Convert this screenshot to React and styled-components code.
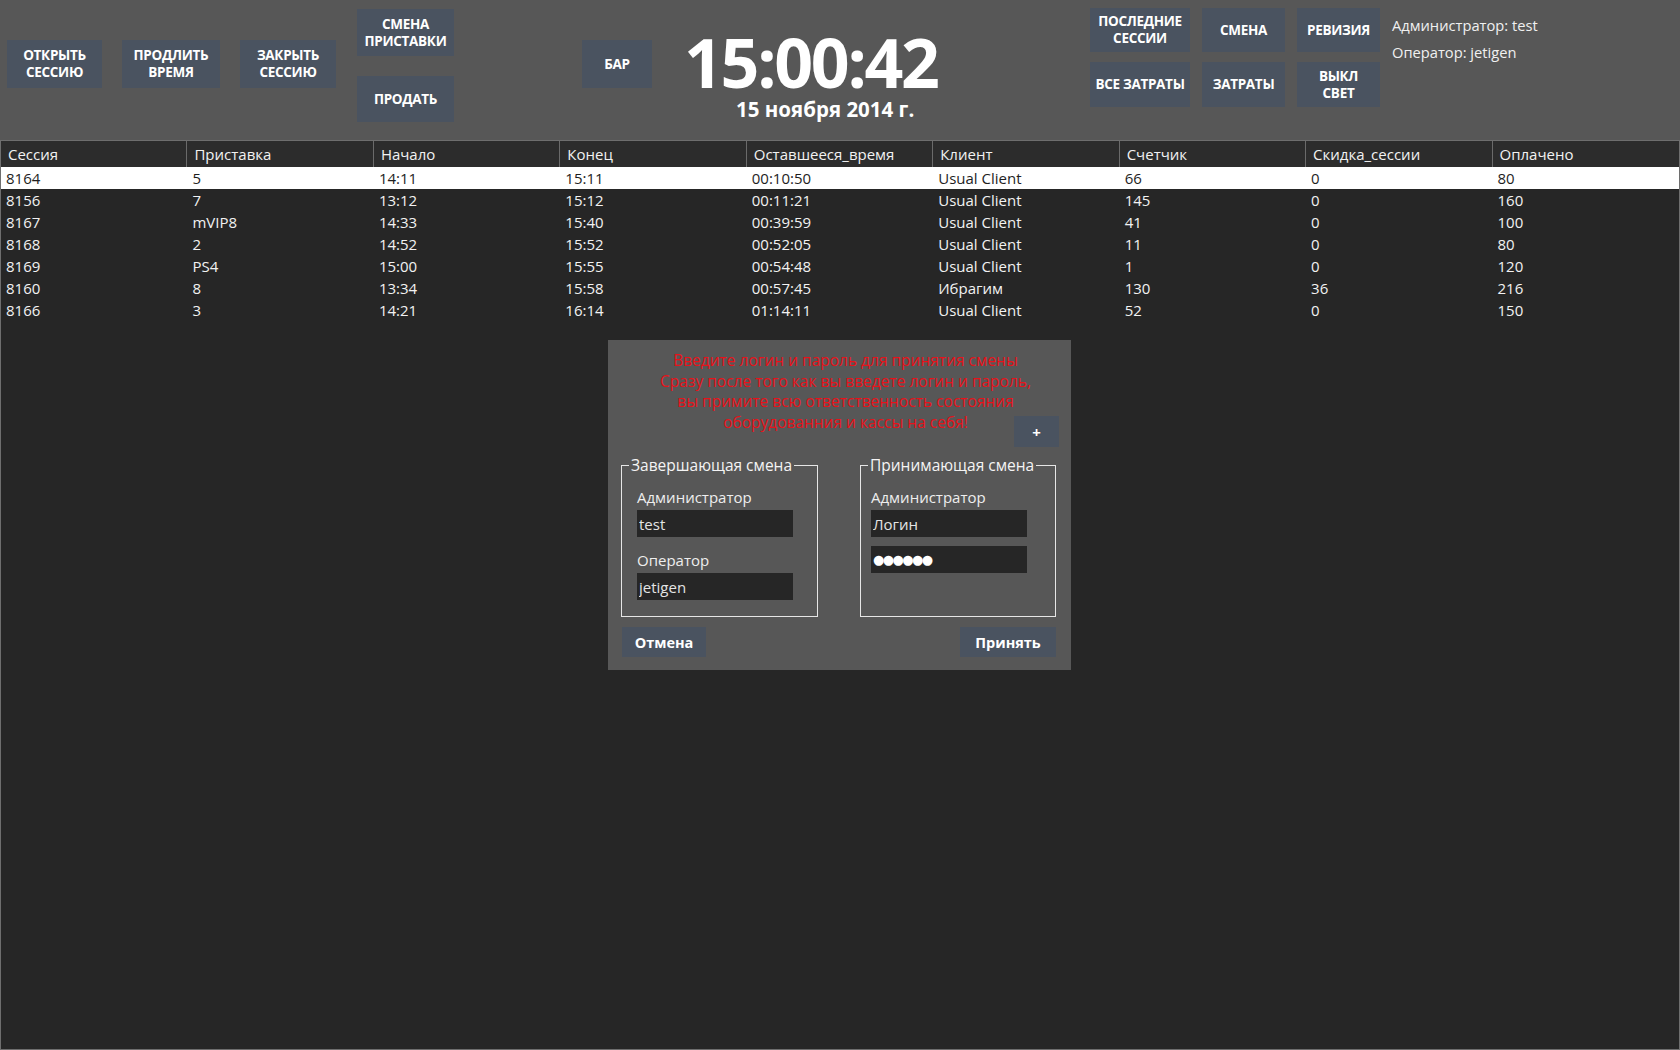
import styled, { createGlobalStyle } from "styled-components"

const GlobalStyle = createGlobalStyle`
  html, body {
    margin: 0;
    padding: 0;
  }
  body {
    background: #262626;
    font-family: "Open Sans", "Noto Sans", "DejaVu Sans", sans-serif;
    color: #f2f2f2;
  }
  * {
    box-sizing: border-box;
  }
`;

const Page = styled.div`
  position: relative;
  width: 100vw;
  height: 100vh;
  display: flex;
  flex-direction: column;
  overflow: hidden;
`;

const TopBar = styled.div`
  flex: none;
  height: 140px;
  background: #575757;
  display: flex;
  align-items: flex-start;
  padding-left: 7px;
`;

const Group = styled.div`
  display: flex;
  gap: ${(p) => p.$gap || 20}px;
  flex-direction: ${(p) => (p.$column ? "column" : "row")};
  margin-top: ${(p) => p.$top || 0}px;
  margin-left: ${(p) => p.$left || 0}px;
`;

const Btn = styled.button`
  width: ${(p) => (p.$w ? `${p.$w}px` : "auto")};
  height: ${(p) => p.$h || 48}px;
  padding: 0;
  border: none;
  background: #4a5360;
  color: #ffffff;
  font-family: inherit;
  font-weight: 700;
  font-size: 13.5px;
  line-height: 17px;
  text-transform: uppercase;
  text-align: center;
  letter-spacing: -0.3px;
`;

const Clock = styled.div`
  display: flex;
  flex-direction: column;
  align-items: flex-start;
  margin-left: 32px;
  margin-top: 32px;
`;

const Time = styled.div`
  font-size: 68px;
  font-weight: 700;
  line-height: 60px;
  color: #ffffff;
  letter-spacing: -2.3px;
`;

const DateLine = styled.div`
  font-size: 20.5px;
  font-weight: 700;
  line-height: 24px;
  color: #ffffff;
  margin-left: 52px;
  margin-top: 5px;
`;

const RightGrid = styled.div`
  display: grid;
  grid-template-columns: 100px 83px 83px;
  grid-template-rows: 44px 45px;
  column-gap: 12px;
  row-gap: 10px;
  margin-top: 8px;
  margin-left: auto;
`;

const Info = styled.div`
  margin: 12px 0 0 12px;
  width: 288px;
  font-size: 14.7px;
  line-height: 27px;
  color: #f0f0f0;
`;

const Table = styled.div`
  flex: 1;
  display: flex;
  flex-direction: column;
  border: 1px solid #0c0c0c;
  outline: 1px solid #6e6e6e;
  outline-offset: -1px;
  background: #262626;
`;

const Row = styled.div`
  display: grid;
  grid-template-columns: repeat(9, 1fr);
  height: 22px;
  background: ${(p) => (p.$selected ? "#ffffff" : "transparent")};
  color: ${(p) => (p.$selected ? "#1e1e1e" : "#f2f2f2")};
`;

const HeadRow = styled(Row)`
  height: 26px;
  background: #2c2c2c;
`;

const Cell = styled.div`
  padding-left: 5px;
  font-size: 15px;
  line-height: 22px;
  white-space: nowrap;
  overflow: hidden;
`;

const HeadCell = styled(Cell)`
  padding-left: 7px;
  line-height: 26px;
  border-right: 1px solid #6a6a6a;
  &:last-child {
    border-right: none;
  }
`;

const Modal = styled.div`
  position: absolute;
  left: 608px;
  top: 340px;
  width: 463px;
  height: 330px;
  background: #575757;
  display: flex;
  flex-direction: column;
  padding: 10px 15px 13px 13px;
`;

const Message = styled.div`
  color: #e8121a;
  font-size: 15.5px;
  line-height: 20.6px;
  text-align: center;
  margin-left: 12px;
  margin-right: -2px;
  white-space: nowrap;
`;

const PlusRow = styled.div`
  display: flex;
  justify-content: flex-end;
  margin-top: -16px;
  margin-right: -3px;
`;

const SmallBtn = styled.button`
  width: ${(p) => p.$w}px;
  height: ${(p) => p.$h}px;
  padding: 0;
  border: none;
  background: #4a5360;
  color: #ffffff;
  font-family: inherit;
  font-weight: 700;
  font-size: ${(p) => p.$size || 14.5}px;
`;

const Boxes = styled.div`
  display: flex;
  gap: 42px;
  margin-top: 8px;
  align-items: stretch;
`;

const Box = styled.fieldset`
  margin: 0;
  width: ${(p) => p.$w}px;
  height: 162px;
  padding: 11px 0 0 ${(p) => p.$inset}px;
  border: 1px solid #e6e6e6;
  display: flex;
  flex-direction: column;
  align-items: flex-start;
`;

const Legend = styled.legend`
  margin-left: ${(p) => 7 - p.$inset}px;
  padding: 0 2px;
  font-size: 15.5px;
  line-height: 20px;
  color: #f4f4f4;
`;

const Label = styled.div`
  font-size: 15px;
  line-height: 22px;
  color: #eeeeee;
  margin-bottom: 2px;
`;

const Field = styled.input`
  width: 156px;
  height: 27px;
  margin: 0 0 ${(p) => p.$gap || 0}px 0;
  padding: 0 2px;
  border: none;
  outline: none;
  background: #262626;
  color: ${(p) => (p.$dots ? "#ffffff" : "#e4e4e4")};
  font-family: ${(p) => (p.$dots ? '"DejaVu Sans", sans-serif' : "inherit")};
  font-size: ${(p) => (p.$dots ? 13 : 15)}px;
  letter-spacing: ${(p) => (p.$dots ? "-1.6px" : "0")};
`;

const Footer = styled.div`
  display: flex;
  justify-content: space-between;
  margin-top: 10px;
  padding-left: 1px;
`;

const headers = [
  "Сессия",
  "Приставка",
  "Начало",
  "Конец",
  "Оставшееся_время",
  "Клиент",
  "Счетчик",
  "Скидка_сессии",
  "Оплачено",
];

const rows = [
  ["8164", "5", "14:11", "15:11", "00:10:50", "Usual Client", "66", "0", "80"],
  ["8156", "7", "13:12", "15:12", "00:11:21", "Usual Client", "145", "0", "160"],
  ["8167", "mVIP8", "14:33", "15:40", "00:39:59", "Usual Client", "41", "0", "100"],
  ["8168", "2", "14:52", "15:52", "00:52:05", "Usual Client", "11", "0", "80"],
  ["8169", "PS4", "15:00", "15:55", "00:54:48", "Usual Client", "1", "0", "120"],
  ["8160", "8", "13:34", "15:58", "00:57:45", "Ибрагим", "130", "36", "216"],
  ["8166", "3", "14:21", "16:14", "01:14:11", "Usual Client", "52", "0", "150"],
];

const App = () => {
  return (
    <Page>
      <GlobalStyle />
      <TopBar>
        <Group $top={40}>
          <Btn $w={95}>Открыть<br />сессию</Btn>
          <Btn $w={98}>Продлить<br />время</Btn>
          <Btn $w={96}>Закрыть<br />сессию</Btn>
        </Group>
        <Group $column $top={9} $left={21}>
          <Btn $w={97} $h={47}>Смена<br />приставки</Btn>
          <Btn $w={97} $h={46}>Продать</Btn>
        </Group>
        <Group $top={40} $left={128}>
          <Btn $w={70}>Бар</Btn>
        </Group>
        <Clock>
          <Time>15:00:42</Time>
          <DateLine>15 ноября 2014 г.</DateLine>
        </Clock>
        <RightGrid>
          <Btn $h={44}>Последние<br />сессии</Btn>
          <Btn $h={44}>Смена</Btn>
          <Btn $h={44}>Ревизия</Btn>
          <Btn $h={45}>Все затраты</Btn>
          <Btn $h={45}>Затраты</Btn>
          <Btn $h={45}>Выкл<br />свет</Btn>
        </RightGrid>
        <Info>
          <div>Администратор: test</div>
          <div>Оператор: jetigen</div>
        </Info>
      </TopBar>

      <Table>
        <HeadRow>
          {headers.map((h) => (
            <HeadCell key={h}>{h}</HeadCell>
          ))}
        </HeadRow>
        {rows.map((r, i) => (
          <Row key={r[0]} $selected={i === 0}>
            {r.map((c, j) => (
              <Cell key={j}>{c}</Cell>
            ))}
          </Row>
        ))}
      </Table>

      <Modal>
        <Message>
          Введите логин и пароль для принятия смены
          <br />
          Сразу после того как вы введете логин и пароль,
          <br />
          вы примите всю ответственность состояния
          <br />
          оборудованния и кассы на себя!
        </Message>
        <PlusRow>
          <SmallBtn $w={45} $h={31} $size={15}>+</SmallBtn>
        </PlusRow>
        <Boxes>
          <Box $w={197} $inset={15}>
            <Legend $inset={15}>Завершающая смена</Legend>
            <Label>Администратор</Label>
            <Field readOnly defaultValue="test" $gap={12} />
            <Label>Оператор</Label>
            <Field readOnly defaultValue="jetigen" />
          </Box>
          <Box $w={196} $inset={10}>
            <Legend $inset={10}>Принимающая смена</Legend>
            <Label>Администратор</Label>
            <Field readOnly defaultValue="Логин" $gap={9} />
            <Field readOnly defaultValue="●●●●●●" $dots />
          </Box>
        </Boxes>
        <Footer>
          <SmallBtn $w={84} $h={30}>Отмена</SmallBtn>
          <SmallBtn $w={96} $h={30}>Принять</SmallBtn>
        </Footer>
      </Modal>
    </Page>
  )
}

export default App
